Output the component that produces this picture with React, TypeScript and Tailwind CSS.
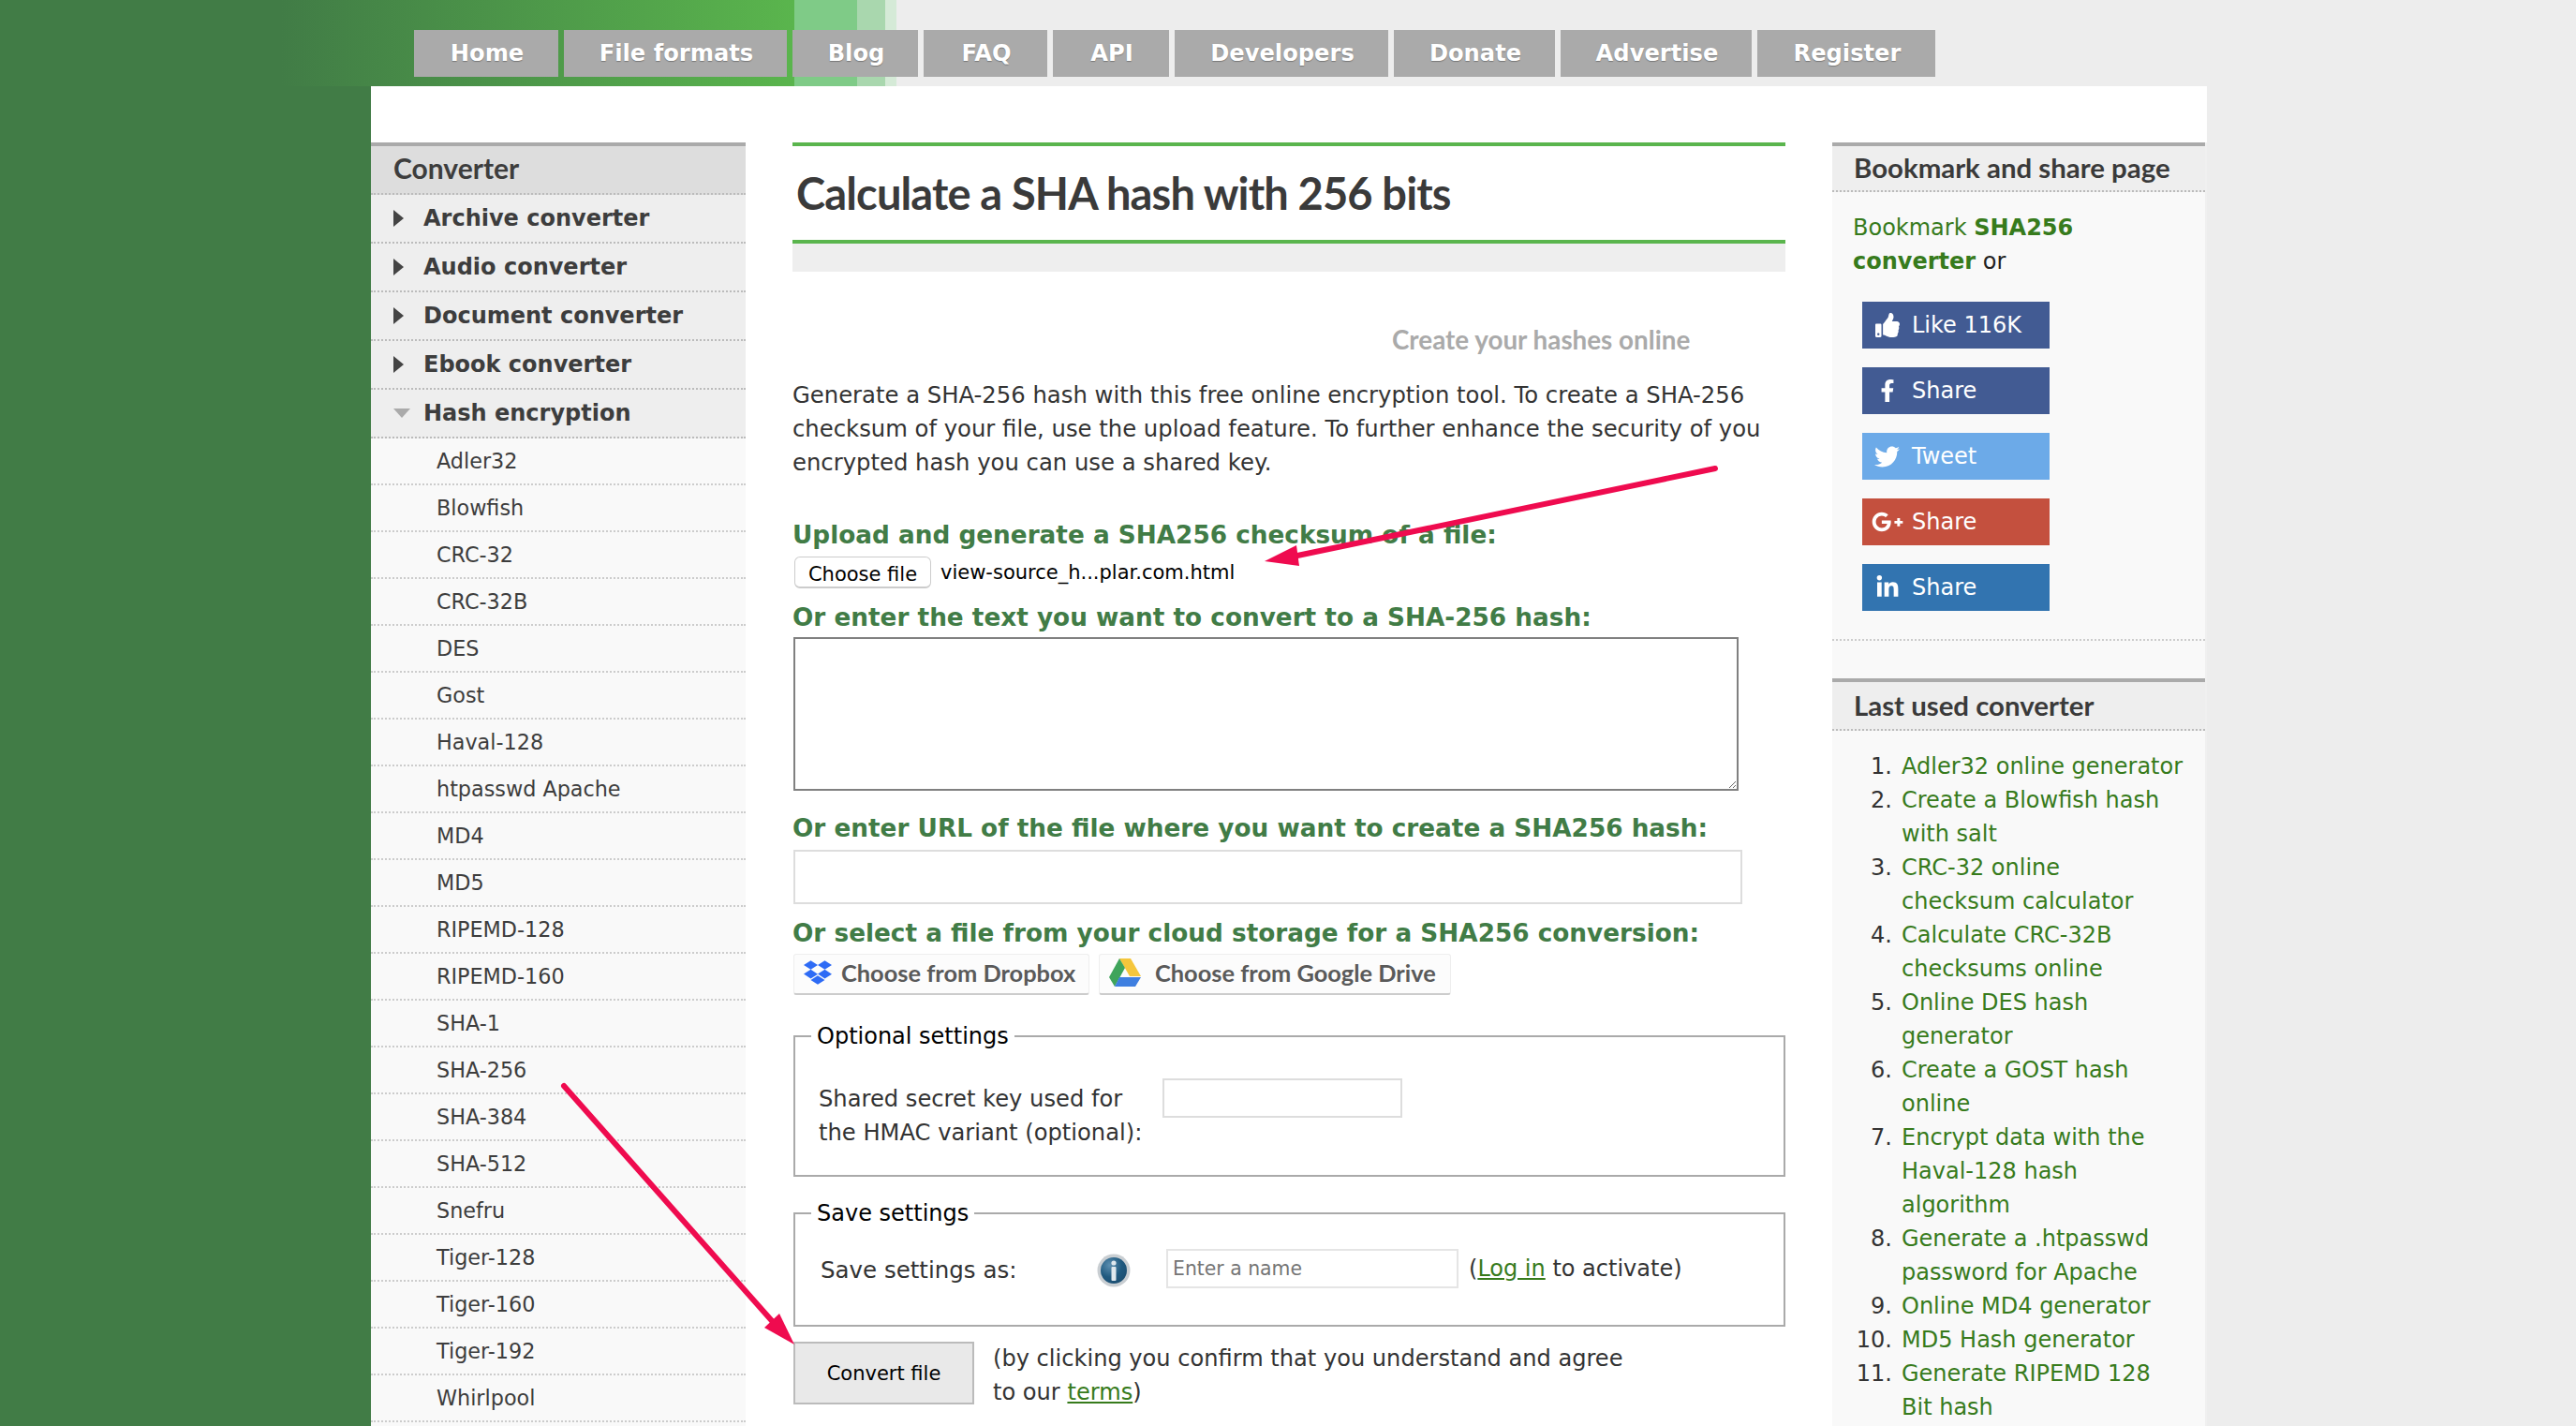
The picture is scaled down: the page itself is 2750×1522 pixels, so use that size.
import React from 'react';
import { FaDropbox, FaFacebookF, FaGooglePlusG, FaLinkedinIn, FaThumbsUp, FaTwitter } from 'react-icons/fa';

const navItems = [
    { label: 'Home', width: 'w-[154px]' },
    { label: 'File formats', width: 'w-[238px]' },
    { label: 'Blog', width: 'w-[134px]' },
    { label: 'FAQ', width: 'w-[132px]' },
    { label: 'API', width: 'w-[124px]' },
    { label: 'Developers', width: 'w-[228px]' },
    { label: 'Donate', width: 'w-[172px]' },
    { label: 'Advertise', width: 'w-[204px]' },
    { label: 'Register', width: 'w-[190px]' },
];

const converters = ['Archive converter', 'Audio converter', 'Document converter', 'Ebook converter'];

const hashes = [
    'Adler32', 'Blowfish', 'CRC-32', 'CRC-32B', 'DES', 'Gost', 'Haval-128', 'htpasswd Apache', 'MD4', 'MD5',
    'RIPEMD-128', 'RIPEMD-160', 'SHA-1', 'SHA-256', 'SHA-384', 'SHA-512', 'Snefru', 'Tiger-128', 'Tiger-160',
    'Tiger-192', 'Whirlpool',
];

const lastUsed = [
    ['Adler32 online generator'],
    ['Create a Blowfish hash', 'with salt'],
    ['CRC-32 online', 'checksum calculator'],
    ['Calculate CRC-32B', 'checksums online'],
    ['Online DES hash', 'generator'],
    ['Create a GOST hash', 'online'],
    ['Encrypt data with the', 'Haval-128 hash', 'algorithm'],
    ['Generate a .htpasswd', 'password for Apache'],
    ['Online MD4 generator'],
    ['MD5 Hash generator'],
    ['Generate RIPEMD 128', 'Bit hash'],
];

const shareButtons = [
    { label: 'Like 116K', bg: 'bg-[#425b93]', icon: <FaThumbsUp className="w-[26px] h-[26px]" /> },
    { label: 'Share', bg: 'bg-[#425b93]', icon: <FaFacebookF className="w-[24px] h-[24px]" /> },
    { label: 'Tweet', bg: 'bg-[#6caae8]', icon: <FaTwitter className="w-[27px] h-[27px]" /> },
    { label: 'Share', bg: 'bg-[#c4503e]', icon: <FaGooglePlusG className="w-[34px] h-[34px]" /> },
    { label: 'Share', bg: 'bg-[#3274b0]', icon: <FaLinkedinIn className="w-[26px] h-[26px]" /> },
];

const GreenHeading: React.FC<{ className: string; children: React.ReactNode }> = ({ className, children }) => (
    <h3 className={`text-[26.3px] leading-[36px] font-bold text-[#417c46] whitespace-nowrap ${className}`}>{children}</h3>
);

const PanelHeader: React.FC<{ title: string; height: string }> = ({ title, height }) => (
    <div className="border-t-4 border-[#aaa] bg-[#eee]">
        <div className={`pl-[23px] pb-[1px] border-b-2 border-dotted border-[#bbb] flex items-center font-['Lato',sans-serif] font-bold text-[29.4px] text-[#3a3a3a] ${height}`}>
            {title}
        </div>
    </div>
);

const Sidebar: React.FC = () => (
    <aside className="w-[400px] shrink-0 bg-[#f9f9f9] text-[#3d3d3d]">
        <div className="border-t-4 border-[#aaa] h-[56px] bg-[#ddd]">
            <div className="h-[52px] pb-[3px] pl-[24px] border-b-2 border-dotted border-[#bbb] flex items-center font-['Lato',sans-serif] font-bold text-[30px]">
                Converter
            </div>
        </div>
        {converters.map(name => (
            <div key={name} className="h-[52px] bg-[#eee] border-b-2 border-dotted border-[#bbb] flex items-center pl-[24px] font-bold text-[24px]">
                <svg width="12" height="18" viewBox="0 0 12 18" className="mr-[20px]"><polygon points="0,0 11,9 0,18" fill="#444" /></svg>
                {name}
            </div>
        ))}
        <div className="h-[52px] bg-[#eee] border-b-2 border-dotted border-[#bbb] flex items-center pl-[24px] font-bold text-[24px]">
            <svg width="18" height="10" viewBox="0 0 18 10" className="mr-[14px]"><polygon points="0,0 18,0 9,10" fill="#aaa" /></svg>
            Hash encryption
        </div>
        {hashes.map(name => (
            <div key={name} className="h-[50px] pt-[1px] border-b-2 border-dotted border-[#ccc] flex items-center pl-[70px] text-[22.3px]">
                {name}
            </div>
        ))}
    </aside>
);

const DriveIcon: React.FC = () => (
    <svg width="34" height="30" viewBox="0 0 34 30">
        <polygon points="11,0 23,0 34,19 22,19" fill="#f5c63c" />
        <polygon points="11,0 17,10 6,30 0,20" fill="#3fa45b" />
        <polygon points="11,20 34,20 28,30 6,30" fill="#3f7fe0" />
    </svg>
);

const InfoIcon: React.FC = () => (
    <svg width="36" height="36" viewBox="0 0 36 36" className="mt-1 shrink-0">
        <defs>
            <radialGradient id="infoBlue" cx="35%" cy="30%" r="75%">
                <stop offset="0%" stopColor="#5d8fb0" />
                <stop offset="60%" stopColor="#205a80" />
                <stop offset="100%" stopColor="#1d4f72" />
            </radialGradient>
        </defs>
        <circle cx="18" cy="18" r="17.5" fill="#c9ced2" />
        <circle cx="18" cy="18" r="14" fill="url(#infoBlue)" />
        <rect x="15.5" y="14" width="5" height="15" rx="1" fill="#dfe8ee" />
        <circle cx="18" cy="10" r="2.6" fill="#dfe8ee" />
    </svg>
);

const MainColumn: React.FC = () => (
    <main className="w-[1060px] shrink-0 text-[24px] leading-[36px] text-[#333]">
        <div className="h-[108px] border-y-4 border-[#5ab54d] pl-[4px] flex items-center font-['Lato',sans-serif] font-bold text-[47px] tracking-[-0.85px] text-[#3a3a3a]">
            Calculate a SHA hash with 256 bits
        </div>
        <div className="h-[30px] bg-[#eee]" />
        <div className="mt-[55px] pl-[640px] font-['Lato',sans-serif] font-bold text-[27.8px] text-[#aaa] whitespace-nowrap">Create your hashes online</div>
        <p className="mt-[23px] text-[24.3px] whitespace-nowrap">
            Generate a SHA-256 hash with this free online encryption tool. To create a SHA-256<br />
            checksum of your file, use the upload feature. To further enhance the security of you<br />
            encrypted hash you can use a shared key.
        </p>
        <GreenHeading className="mt-[41px]">Upload and generate a SHA256 checksum of a file:</GreenHeading>
        <div className="mt-[4px] flex items-center text-[21px] text-black">
            <button className="ml-[2px] w-[146px] h-[34px] pb-[2px] bg-white border border-[#ccc] border-b-2 rounded-md">Choose file</button>
            <span className="ml-[10px]">view-source_h...plar.com.html</span>
        </div>
        <GreenHeading className="mt-[12px]">Or enter the text you want to convert to a SHA-256 hash:</GreenHeading>
        <textarea className="block mt-[3px] ml-[1px] w-[1009px] h-[164px] border-2 border-[#808080] bg-white" />
        <GreenHeading className="mt-[22px]">Or enter URL of the file where you want to create a SHA256 hash:</GreenHeading>
        <input className="block mt-[5px] ml-[1px] w-[1013px] h-[58px] border-2 border-[#ddd] bg-white" />
        <GreenHeading className="mt-[13px]">Or select a file from your cloud storage for a SHA256 conversion:</GreenHeading>
        <div className="mt-[4px] ml-[1px] flex gap-[10px] font-['Lato',sans-serif] font-bold text-[25.4px] text-[#5a5a5a] whitespace-nowrap">
            <button className="w-[316px] h-[44px] pb-[3px] bg-[#fcfcfc] border border-[#eee] border-b-2 border-b-[#ccc] rounded-[3px] flex items-center pl-[10px]">
                <FaDropbox className="w-[30px] h-[30px] text-[#2e6bf5] mr-[10px]" />
                Choose from Dropbox
            </button>
            <button className="w-[376px] h-[44px] pb-[3px] bg-[#fcfcfc] border border-[#eee] border-b-2 border-b-[#ccc] rounded-[3px] flex items-center pl-[10px]">
                <DriveIcon />
                <span className="ml-[15px]">Choose from Google Drive</span>
            </button>
        </div>
        <fieldset className="mt-[26px] ml-[1px] w-[1059px] h-[168px] border-2 border-[#aaa]">
            <legend className="ml-[17px] px-[6px] text-black">Optional settings</legend>
            <div className="flex pt-[31px] pl-[25px]">
                <div className="w-[367px] text-[24.2px] whitespace-nowrap">Shared secret key used for<br />the HMAC variant (optional):</div>
                <input className="w-[256px] h-[42px] -mt-[4px] border-2 border-[#ddd] bg-white" />
            </div>
        </fieldset>
        <fieldset className="mt-[21px] ml-[1px] w-[1059px] h-[139px] border-2 border-[#aaa]">
            <legend className="ml-[17px] px-[6px] text-black">Save settings</legend>
            <div className="flex items-center pt-[20px] pl-[27px]">
                <div className="w-[295px] mt-1 text-[24.5px]">Save settings as:</div>
                <InfoIcon />
                <input placeholder="Enter a name" className="ml-[38px] w-[312px] h-[42px] border-2 border-[#e5e5e5] px-[5px] text-[20.4px] bg-white placeholder:text-[#757575]" />
                <span className="ml-[11px] whitespace-nowrap">(<a className="text-[#377b1c] underline">Log in</a> to activate)</span>
            </div>
        </fieldset>
        <div className="mt-[16px] ml-[1px] flex">
            <button className="w-[193px] h-[67px] bg-[#e9e9e9] border-2 border-[#bbb] text-[21px] text-black">Convert file</button>
            <div className="ml-[20px] text-[24.1px] whitespace-nowrap">
                (by clicking you confirm that you understand and agree<br />
                to our <a className="text-[#377b1c] underline">terms</a>)
            </div>
        </div>
    </main>
);

const RightColumn: React.FC = () => (
    <aside className="w-[400px] shrink-0 bg-[#f9f9f9] border-r-2 border-[#f0f0f0] text-[24px] leading-[36px]">
        <PanelHeader title="Bookmark and share page" height="h-[49px]" />
        <div className="pt-[20px] pb-[30px] border-b-2 border-dotted border-[#ccc]">
            <p className="pl-[22px] whitespace-nowrap text-[#222]">
                <span className="text-[#377b1c]">Bookmark <b>SHA256</b><br /><b>converter</b></span> or
            </p>
            <div className="mt-[25px] ml-[32px] flex flex-col gap-[20px]">
                {shareButtons.map((btn, i) => (
                    <div key={i} className={`w-[200px] h-[50px] flex items-center text-white ${btn.bg}`}>
                        <span className="w-[53px] flex justify-center">{btn.icon}</span>
                        {btn.label}
                    </div>
                ))}
            </div>
        </div>
        <div className="h-[40px]" />
        <PanelHeader title="Last used converter" height="h-[52px]" />
        <ol className="pt-[20px]">
            {lastUsed.map((lines, i) => (
                <li key={i} className="flex">
                    <span className="w-[74px] pr-[10px] text-right text-[#333]">{i + 1}.</span>
                    <span className="text-[#377b1c] whitespace-nowrap">
                        {lines.map(line => <span key={line} className="block">{line}</span>)}
                    </span>
                </li>
            ))}
        </ol>
    </aside>
);

const App: React.FC = () => (
    <div className="relative w-[2750px] h-[1522px] overflow-hidden font-['DejaVu_Sans',sans-serif] bg-[#ededed]">
        <header className="h-[92px] pt-[32px] pl-[442px] bg-[linear-gradient(90deg,#417c46_0,#417c46_300px,#5ab54d_848px,#7fcb87_848px,#7fcb87_915px,#a9d7ae_915px,#a9d7ae_945px,#d5ead7_945px,#d5ead7_957px,#ededed_957px)]">
            <nav className="flex gap-[6px]">
                {navItems.map(item => (
                    <a key={item.label} className={`h-[50px] bg-[#aaa] pl-[2px] pt-[1px] flex items-center justify-center text-white font-bold text-[24.2px] [text-shadow:0_1px_1px_#777] ${item.width}`}>
                        {item.label}
                    </a>
                ))}
            </nav>
        </header>
        <div className="flex h-[1430px]">
            <div className="w-[396px] bg-[#417c46]" />
            <div className="w-[1960px] bg-white pt-[60px] flex gap-[50px]">
                <Sidebar />
                <MainColumn />
                <RightColumn />
            </div>
        </div>
        {/* red annotation arrows drawn over the page */}
        <svg className="absolute inset-0 pointer-events-none" width="2750" height="1522" viewBox="0 0 2750 1522">
            <line x1="1831" y1="500" x2="1385" y2="593" stroke="#ef0b4f" strokeWidth="6" strokeLinecap="round" />
            <polygon points="1350,599 1384,582 1387,604" fill="#ef0b4f" />
            <line x1="602" y1="1159" x2="826" y2="1412" stroke="#ef0b4f" strokeWidth="6" strokeLinecap="round" />
            <polygon points="848,1435 832,1402 816,1417" fill="#ef0b4f" />
        </svg>
    </div>
);

export default App;
